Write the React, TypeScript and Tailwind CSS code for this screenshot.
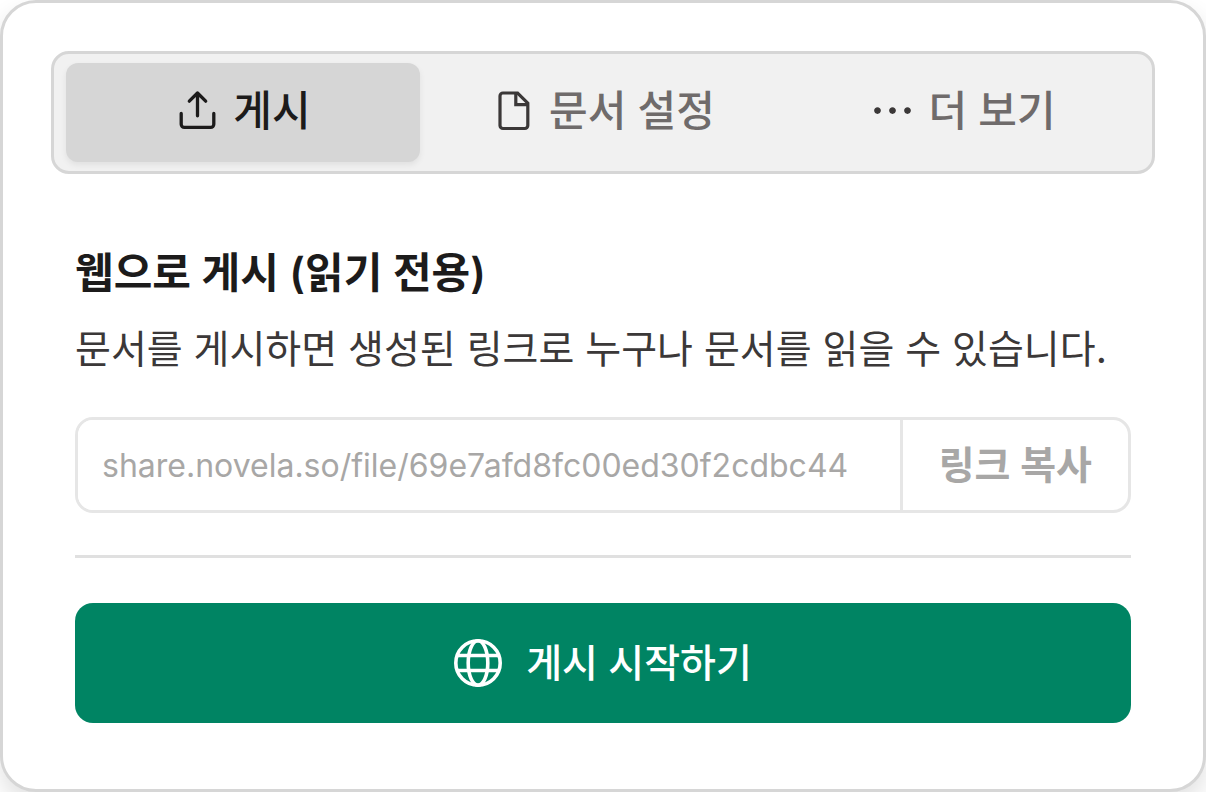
import type { ReactNode } from "react";
import { RxDotsHorizontal } from "react-icons/rx";

function UploadIcon() {
  return (
    <svg
      viewBox="0 0 45 45"
      className="size-[45px] shrink-0"
      fill="none"
      stroke="currentColor"
      strokeWidth="3.3"
      strokeLinecap="round"
      strokeLinejoin="round"
      aria-hidden="true"
    >
      <path d="M6.2 25.5V36.2A3.2 3.2 0 0 0 9.4 39.4H35.6A3.2 3.2 0 0 0 38.8 36.2V25.5" />
      <path d="M22.5 27.8V5M14.3 13.2L22.5 5L30.7 13.2" />
    </svg>
  );
}

function FileIcon() {
  return (
    <svg
      viewBox="0 0 45 45"
      className="size-[45px] shrink-0"
      fill="none"
      stroke="currentColor"
      strokeWidth="3.2"
      aria-hidden="true"
    >
      <path d="M12 5H26.6L36.8 15.2V37.5A3 3 0 0 1 33.8 40.5H12A3 3 0 0 1 9 37.5V8A3 3 0 0 1 12 5Z" />
      <path d="M24.8 5V16.7H36.8" />
    </svg>
  );
}

function GlobeIcon() {
  return (
    <svg
      viewBox="0 0 48 48"
      className="size-12 shrink-0"
      fill="none"
      stroke="currentColor"
      strokeWidth="3.6"
      aria-hidden="true"
    >
      <circle cx="24" cy="24" r="22.2" />
      <ellipse cx="24" cy="24" rx="9.8" ry="22.2" />
      <path d="M3 16.5H45M3 31.5H45" />
    </svg>
  );
}

type TabProps = { icon: ReactNode; label: string; selected?: boolean };

function Tab({ icon, label, selected = false }: TabProps) {
  return (
    <button
      type="button"
      role="tab"
      aria-selected={selected}
      className={
        selected
          ? "flex flex-1 items-center justify-center gap-[13px] rounded-xl bg-[#d6d6d6] pb-1 text-[#1c1b1b] shadow-[0_3px_6px_rgba(0,0,0,0.07)]"
          : "flex flex-1 items-center justify-center gap-[13px] rounded-xl pb-1 text-[#3b3838]"
      }
    >
      {icon}
      <span className={selected ? "text-[#1c1b1b]" : "text-[#6f6b6b]"}>{label}</span>
    </button>
  );
}

export default function App() {
  return (
    <main className="min-h-screen bg-white font-['Inter','Noto_Sans_CJK_KR',sans-serif]">
      <section className="min-h-screen rounded-[36px] border-3 border-[#d6d6d6] bg-white p-12 shadow-[0_12px_24px_rgba(0,0,0,0.12)]">
        <div
          role="tablist"
          aria-label="문서 메뉴"
          className="flex h-[123px] gap-1.5 rounded-[18px] border-3 border-[#d6d6d6] bg-[#f1f1f1] px-3 py-[9px] text-[42px] leading-[60px] font-medium"
        >
          <Tab selected icon={<UploadIcon />} label="게시" />
          <Tab icon={<FileIcon />} label="문서 설정" />
          <Tab icon={<RxDotsHorizontal className="size-[45px] shrink-0" />} label="더 보기" />
        </div>

        <div className="flex flex-col px-6 pt-[69px]">
          <h2 className="text-[42px] leading-[60px] font-semibold text-[#1c1b1b]">웹으로 게시 (읽기 전용)</h2>
          <p className="mt-4 text-[39px] leading-[60px] whitespace-nowrap text-[#3b3838]">
            문서를 게시하면 생성된 링크로 누구나 문서를 읽을 수 있습니다.
          </p>

          <div className="mt-[38px] flex h-24 overflow-hidden rounded-[18px] border-3 border-[#e6e6e6]">
            <input
              readOnly
              aria-label="공유 링크"
              value="share.novela.so/file/69e7afd8fc00ed30f2cdbc44"
              className="min-w-0 flex-1 bg-white px-6 pt-0.5 text-[32px] text-[#a8a7a6] outline-none"
            />
            <button
              type="button"
              className="border-l-3 border-[#e6e6e6] px-9 text-[39px] leading-[60px] font-semibold whitespace-nowrap text-[#a8a7a6]"
            >
              링크 복사
            </button>
          </div>

          <hr className="mt-[42px] border-t-3 border-[#e0e0e0]" />

          <button
            type="button"
            className="mt-[45px] flex h-[120px] items-center justify-center gap-6 rounded-[18px] bg-[#008463] text-[39px] leading-[60px] font-medium text-white"
          >
            <GlobeIcon />
            게시 시작하기
          </button>
        </div>
      </section>
    </main>
  );
}
